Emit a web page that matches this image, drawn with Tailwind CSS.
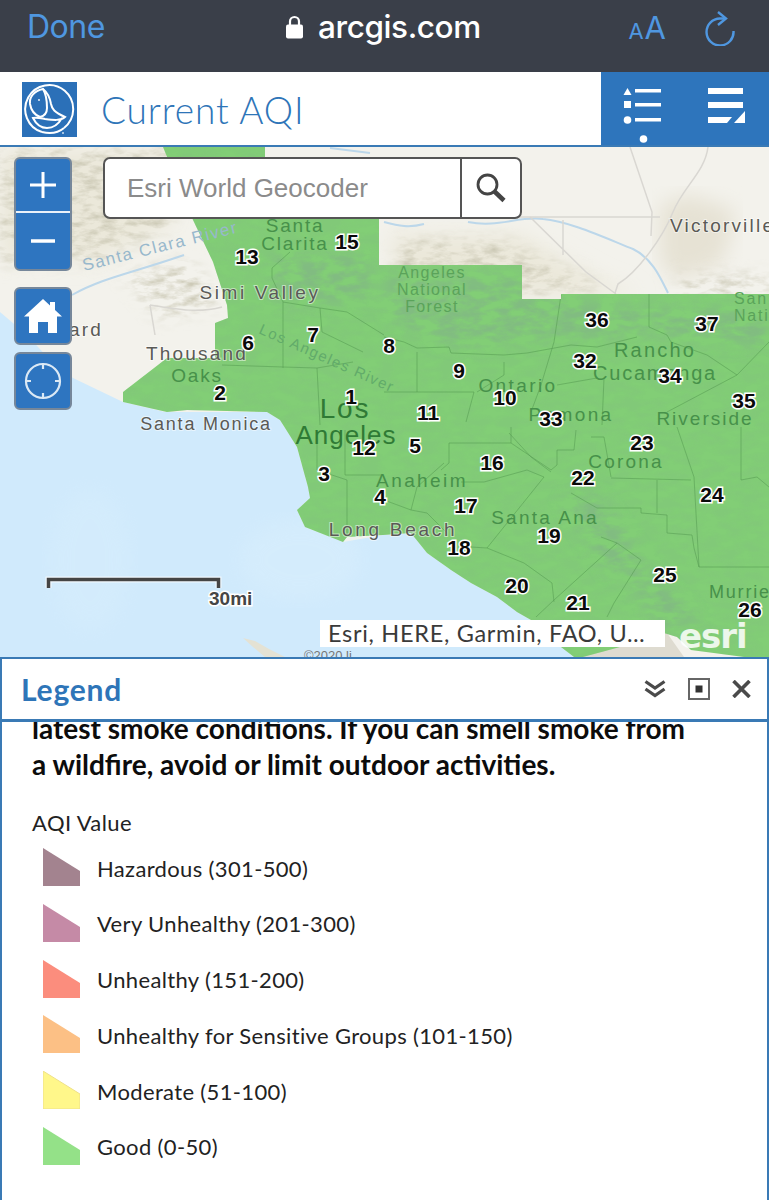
<!DOCTYPE html>
<html lang="en">
<head>
  <meta charset="UTF-8" />
  <title>Current AQI</title>
  <script src="https://cdn.jsdelivr.net/npm/@tailwindcss/browser@4"></script>
</head>
<body class="bg-white w-[769px] h-[1200px] overflow-hidden font-['Lato',sans-serif]">

  <!-- Browser bar -->
  <div class="h-[72px] bg-[#3a3f49] relative flex items-start justify-between pl-[27px] pr-[34px] pt-[6px]">
    <span class="font-['Inter',sans-serif] text-[32px] leading-[42px] text-[#4f97e0] tracking-[-0.5px]">Done</span>
    <div class="absolute left-[286px] top-[6px] flex items-center gap-[15px] h-[42px]">
      <svg width="17" height="24" viewBox="0 0 17 24"><path d="M4 10V6.500a4.500 4.500 0 0 1 9 0V10" fill="none" stroke="#fff" stroke-width="2.200"/><rect x="0" y="9.500" width="17" height="14" rx="2" fill="#fff"/></svg>
      <span class="font-['Inter',sans-serif] font-medium text-[31.500px] leading-[42px] text-white tracking-[-0.4px]">arcgis.com</span>
    </div>
    <div class="flex items-center gap-[39px] h-[42px]">
      <span class="font-['Inter',sans-serif] text-[#4f97e0] leading-none flex items-baseline"><span class="text-[22px] mr-[1px]">A</span><span class="text-[31px]">A</span></span>
      <svg width="30" height="36" viewBox="0 0 30 36" fill="none" stroke="#4f97e0" stroke-width="2.400" class="mt-[2px]"><path d="M21 8.500H15A13.500 13.500 0 1 0 28.500 21"/><path d="M13 2l8 6.500-8 6.500"/></svg>
    </div>
  </div>

  <!-- App header -->
  <div class="h-[75px] bg-white border-b-2 border-[#3a7ab5] flex">
    <div class="flex-1 flex items-start pl-[22px] pt-[10px] gap-[24px]">
      <svg width="55" height="55" viewBox="0 0 55 55" class="shrink-0">
        <rect width="55" height="55" fill="#2b70b8"/>
        <g fill="none" stroke="#fff" stroke-width="2">
          <path d="M42 46A24 24 0 1 0 20 50"/>
          <path d="M21 7C12 9 7 15 8 22c1 6 5 11 10 13 4-1 7-4 7-9 0-7-1-14-4-19z"/>
          <path d="M21 7c5 4 7 9 8 15 1 5 3 8 14 13-4 4-12 3-20 2-5-1-8-2-12-1 3 6 8 10 14 10 6 0 11-3 15-10"/>
          <path d="M20 50c8 2 16 1 22-4"/>
        </g>
        <circle cx="17" cy="18" r="0.900" fill="#fff"/>
        <circle cx="41" cy="51" r="1" fill="#cfe0f2"/>
      </svg>
      <h1 class="font-['Lato',sans-serif] font-light text-[37px] leading-[56px] text-[#2e75b8] tracking-[0.900px]">Current AQI</h1>
    </div>
    <div class="w-[168px] bg-[#2e75bc] relative">
      <svg class="absolute left-[22px] top-[14px]" width="42" height="60" viewBox="0 0 42 60" fill="#fff">
        <path d="M4.500 2l4 7h-8z"/><rect x="12" y="3" width="26" height="3.500"/>
        <rect x="1" y="15" width="7" height="7"/><rect x="12" y="17" width="26" height="3.500"/>
        <circle cx="4.500" cy="34" r="3.800"/><rect x="12" y="32" width="26" height="3.500"/>
        <circle cx="20.500" cy="53" r="3.800"/>
      </svg>
      <svg class="absolute left-[106px] top-[15px]" width="40" height="38" viewBox="0 0 40 38" fill="#fff">
        <rect x="1" y="1" width="35" height="6"/><rect x="1" y="15" width="35" height="6"/>
        <path d="M1 30h24l-5 6H1z"/><path d="M38 24v12H27z"/>
      </svg>
    </div>
  </div>

  <!-- Map -->
  <div class="relative h-[510px] overflow-hidden bg-[#f3f2ee]">
    <svg class="absolute inset-0" width="769" height="510" viewBox="0 147 769 510">
      <defs>
        <filter id="hills" x="-10%" y="-10%" width="120%" height="120%">
          <feGaussianBlur in="SourceGraphic" stdDeviation="8" result="soft"/>
          <feTurbulence type="fractalNoise" baseFrequency="0.06 0.15" numOctaves="4" seed="7" result="noise"/>
          <feColorMatrix in="noise" type="matrix" values="0 0 0 0 0.58  0 0 0 0 0.56  0 0 0 0 0.44  0 0 2 0 -0.8" result="tint"/>
          <feComposite in="tint" in2="soft" operator="in"/>
        </filter>
        <filter id="greenhills" x="-10%" y="-10%" width="120%" height="120%">
          <feGaussianBlur in="SourceGraphic" stdDeviation="7" result="soft"/>
          <feTurbulence type="fractalNoise" baseFrequency="0.05 0.11" numOctaves="4" seed="11" result="noise"/>
          <feColorMatrix in="noise" type="matrix" values="0 0 0 0 0.22  0 0 0 0 0.5  0 0 0 0 0.22  0 0 3 0 -1.050" result="tint"/>
          <feComposite in="tint" in2="soft" operator="in"/>
        </filter>
        <filter id="soft"><feGaussianBlur stdDeviation="10"/></filter>
        <clipPath id="aqi"><path d="M163 147H265V160L379 160V265H522V299H561V294H769V657H744L691 650 677 637 664 633 620 647 583 657H574L561 647 531 620 517 612 497 597 471 583 451 570 427 553 411 533 383 535 347 537 343 542 305 527 297 510 310 498 308 487 297 447 280 420 267 412 187 410 167 412 123 402V392L167 358H215V323L228 318 227 305 213 262 193 220z"/></clipPath>
      </defs>

      <!-- land and water -->
      <rect x="0" y="147" width="769" height="510" fill="#f3f2ec"/>
      <path d="M0 312L27 335 50 360 73 378 123 402 165 412 267 412 280 420 297 447 308 487 310 498 297 510 305 527 343 542 383 535 411 533 427 553 451 570 471 583 497 597 517 612 531 620 561 647 574 657H0z" fill="#d0eafc"/>
      <ellipse cx="300" cy="560" rx="60" ry="40" fill="#e0f2fd" filter="url(#soft)" opacity="0.300"/>
      <ellipse cx="90" cy="560" rx="40" ry="70" fill="#dbf0fd" filter="url(#soft)" opacity="0.300"/>
      <path d="M243 638l12 3 14 8 16 8h-20l-12-10z" fill="#e4e2d4"/>

      <!-- beige terrain -->
      <g fill="#ebe8da" filter="url(#soft)">
        <path d="M0 150H190L170 225 95 262 0 260z"/>
        <path d="M390 235H520L600 280 640 295H400z"/>
      </g>
      <path d="M660 205l30-10 45 15-5 30-10 25-45 15-15-20z" fill="#e6e2d4" filter="url(#soft)"/>
      <g fill="#000" filter="url(#hills)">
        <path d="M0 150H190L170 225 95 262 0 262z"/>
        <path d="M120 275l70-15 30 45-60 15z"/>
        <path d="M400 240H500L610 290 390 300z"/>
        <path d="M680 275h89v20h-89z"/>
      </g>
      <path d="M583 657l10-16 60-8 14 0 17 24z" fill="#dedbd0"/>

      <!-- rivers and roads -->
      <g fill="none" stroke="#bcd7ea" stroke-width="2">
        <path d="M72 295c30-17 60-22 112-40"/>
        <path d="M468 222c30 6 50-6 75-3 25 2 60 18 90 30 20 10 28 30 35 44"/>
        <path d="M384 222c15 4 25 6 40 2"/>
        <path d="M330 148l40 5"/>
      </g>
      <g fill="none" stroke="#d9d7d2" stroke-width="1.500">
        <path d="M630 147l22 65-1 24"/>
        <path d="M708 147c-3 25-25 40-35 65-10 25-35 60-55 72l-3 9"/>
        <path d="M460 217H660"/>
        <path d="M530 217l56 55 30 22M563 220v35"/>
        <path d="M150 305c30 5 50 8 72 2M150 305l5 30"/>
      </g>

      <!-- AQI area -->
      <path d="M163 147H265V160L379 160V265H522V299H561V294H769V657H744L691 650 677 637 664 633 620 647 583 657H574L561 647 531 620 517 612 497 597 471 583 451 570 427 553 411 533 383 535 347 537 343 542 305 527 297 510 310 498 308 487 297 447 280 420 267 412 187 410 167 412 123 402V392L167 358H215V323L228 318 227 305 213 262 193 220z" fill="#82ce76"/>

      <!-- hillshade on the AQI area -->
      <g clip-path="url(#aqi)">
        <rect x="120" y="147" width="649" height="510" fill="#000" filter="url(#greenhills)" opacity="0.250"/>
        <g fill="#000" filter="url(#greenhills)">
          <path d="M385 275h135l5 20 35 5 90 10 80 0 40 10v25l-130-10-100 5-90 5-60-25z"/>
          <path d="M560 500l40-5 40 60-30 20z"/>
          <path d="M270 255h100v45l-90 5z"/>
          <path d="M600 520l60 60 40 40-40 10-30-50z"/>
        </g>

        <!-- county lines -->
        <g fill="none" stroke="#569a52" stroke-width="1" stroke-opacity="0.550">
          <path d="M384 337l20 5 13 6 32-1 2 6 53 2 23-2 44-8 26 2 40-10"/>
          <path d="M561 295l-7 47-13 43-10 27"/>
          <path d="M649 293v34l18 8 4 7 36 13 30 20 32-33M737 375l-70 37"/>
          <path d="M417 352v40M384 392h90l-8 30M504 362v13l-27 17M597 378l-40 7M604 378l-2 47"/>
          <path d="M449 443v20l-8 7M449 443h62l40 27M511 427v16"/>
          <path d="M571 493l26 15h44v5l26 2v18l25 2 2 13 5 19h70"/>
          <path d="M601 537l16 6 24 17-27 43-7 14M617 543l-63 57-18 17"/>
          <path d="M487 548l37 15 28 20 2 19M487 548l57-71-17-7-43 12h-23M487 548l-16-1"/>
          <path d="M657 480v33M611 478l80 2M677 427l17 50 5 90M741 480v-53M741 480l16-3 12 10"/>
          <path d="M591 437h13l7 40M576 430l-2 20h-17v15l-6 5M509 433l22 24 20 15"/>
          <path d="M384 500l27 10 16 3 20 20M444 463l-27 24-6 23"/>
          <path d="M283 302v66M222 365l61 2 34 1 36-6M272 268v10l11 24M283 302l37 6 27 4 37 23M320 308l2 24 41 20M317 368l3 57M290 252l-18 16"/>
          <path d="M317 440v30l30 10v57M345 430v45h38"/>
        </g>
      </g>

      <!-- place names -->
      <g class="font-['Liberation_Sans',sans-serif] text-[19px] fill-[#5a5a56] stroke-white/50 stroke-[2px] [paint-order:stroke] tracking-[2.200px]" text-anchor="middle">
        <text x="206" y="430" class="text-[18px] tracking-[1.800px]">Santa Monica</text>
        <text x="197" y="360">Thousand</text>
        <text x="86" y="336">ard</text>
        <text x="260" y="299" class="tracking-[2.600px]">Simi Valley</text>
        <text x="670" y="232" text-anchor="start">Victorville</text>
        <text x="393" y="536" class="tracking-[2.700px]">Long Beach</text>
      </g>
      <g class="font-['Liberation_Sans',sans-serif] text-[19px] fill-[#47914a] tracking-[1.800px]" text-anchor="middle">
        <text x="295" y="232">Santa</text>
        <text x="295" y="250">Clarita</text>
        <text x="197" y="382">Oaks</text>
        <text x="432" y="278" class="text-[16px] fill-[#5aa35a] tracking-[1.400px]">Angeles</text>
        <text x="432" y="295" class="text-[16px] fill-[#5aa35a] tracking-[1.400px]">National</text>
        <text x="432" y="312" class="text-[16px] fill-[#5aa35a] tracking-[1.400px]">Forest</text>
        <text x="345" y="418" class="text-[28px] fill-[#2f7a35]">Los</text>
        <text x="346" y="444" class="text-[26px] fill-[#2f7a35] tracking-[1px]">Angeles</text>
        <text x="422" y="487" class="tracking-[2.400px]">Anaheim</text>
        <text x="518" y="392" class="tracking-[2.400px]">Ontario</text>
        <text x="571" y="421" class="tracking-[2.400px]">Pomona</text>
        <text x="655" y="357" class="text-[20px] tracking-[2.200px]">Rancho</text>
        <text x="655" y="380" class="text-[20px]">Cucamonga</text>
        <text x="705" y="425" class="tracking-[2px]">Riverside</text>
        <text x="626" y="468" class="tracking-[2.200px]">Corona</text>
        <text x="545" y="524" class="tracking-[2.200px]">Santa Ana</text>
        <text x="709" y="598" class="text-[18px]" text-anchor="start">Murrieta</text>
        <text x="734" y="304" class="text-[16px] fill-[#5aa35a]" text-anchor="start">San</text>
        <text x="734" y="321" class="text-[16px] fill-[#5aa35a]" text-anchor="start">Nati</text>
      </g>
      <text x="84" y="271" transform="rotate(-14 84 271)" class="font-['Liberation_Sans',sans-serif] text-[17px] fill-[#98b8cc] tracking-[1.500px]">Santa Clara River</text>
      <text x="258" y="333" transform="rotate(24 258 333)" class="font-['Liberation_Sans',sans-serif] text-[15px] fill-[#62ab6a] tracking-[1.500px]">Los Angeles River</text>

      <!-- monitor numbers -->
      <g class="font-['Liberation_Sans',sans-serif] font-bold text-[21px] fill-[#0a0a0a] stroke-white stroke-[3px] [paint-order:stroke]" text-anchor="middle">
        <text x="247" y="264">13</text><text x="347" y="249">15</text>
        <text x="248" y="350">6</text><text x="313" y="342">7</text>
        <text x="389" y="353">8</text><text x="220" y="400">2</text>
        <text x="351" y="404">1</text><text x="459" y="378">9</text>
        <text x="505" y="405">10</text><text x="428" y="420">11</text>
        <text x="364" y="455">12</text><text x="415" y="453">5</text>
        <text x="324" y="481">3</text><text x="380" y="504">4</text>
        <text x="492" y="470">16</text><text x="466" y="513">17</text>
        <text x="459" y="555">18</text><text x="549" y="543">19</text>
        <text x="517" y="593">20</text><text x="578" y="610">21</text>
        <text x="583" y="485">22</text><text x="642" y="450">23</text>
        <text x="712" y="502">24</text><text x="665" y="582">25</text>
        <text x="750" y="617">26</text><text x="551" y="426">33</text>
        <text x="585" y="368">32</text><text x="670" y="383">34</text>
        <text x="744" y="408">35</text><text x="597" y="327">36</text>
        <text x="707" y="331">37</text>
      </g>

      <!-- scale bar -->
      <path d="M48.500 588v-8.500h170v8.500" fill="none" stroke="#fff" stroke-width="6" stroke-opacity="0.700"/>
      <path d="M48.500 588v-8.500h170v8.500" fill="none" stroke="#454545" stroke-width="3.500"/>
      <text x="209" y="605" class="font-['Liberation_Sans',sans-serif] font-bold text-[19px] fill-[#454545] stroke-white stroke-[3px] [paint-order:stroke]">30mi</text>

      <text x="304" y="660" class="font-['Liberation_Sans',sans-serif] text-[13px] fill-[#777]">©2020 li</text>
      <text x="679" y="648" class="font-['DejaVu_Sans',sans-serif] font-bold text-[34px] fill-white/85 tracking-[-1px]">esri</text>
    </svg>

    <!-- Zoom buttons -->
    <div class="absolute left-[14px] top-[10px] w-[58px] h-[114px] bg-[#2e75c0] border-2 border-[#76879a] rounded-[6px] flex flex-col">
      <div class="h-[54px] border-b-2 border-white/90 flex items-center justify-center">
        <svg width="28" height="28" viewBox="0 0 28 28" stroke="#fff" stroke-width="3"><path d="M14 1v26M1 14h26"/></svg>
      </div>
      <div class="flex-1 flex items-center justify-center">
        <svg width="24" height="4" viewBox="0 0 24 4" stroke="#fff" stroke-width="3.500"><path d="M0 2h24"/></svg>
      </div>
    </div>
    <!-- Home -->
    <div class="absolute left-[14px] top-[140px] w-[58px] h-[58px] bg-[#2e75c0] border-2 border-[#76879a] rounded-[6px] flex items-center justify-center">
      <svg width="38" height="36" viewBox="0 0 38 36" fill="#fff"><path d="M19 1L0 18.500h5V35h9V24h10v11h9V18.500h5l-7-6.500V4h-5v3.500z"/></svg>
    </div>
    <!-- Locate -->
    <div class="absolute left-[14px] top-[205px] w-[58px] h-[58px] bg-[#2e75c0] border-2 border-[#76879a] rounded-[6px] flex items-center justify-center">
      <svg width="38" height="38" viewBox="0 0 38 38" fill="none" stroke="#dbe9f5" stroke-width="2.200"><circle cx="19" cy="19" r="17"/><path d="M19 2v5M19 31v5M2 19h5M31 19h5"/></svg>
    </div>

    <!-- Search -->
    <div class="absolute left-[103px] top-[10px] w-[419px] h-[62px] bg-white border-2 border-[#555] rounded-[7px] flex">
      <div class="w-[355px] pl-[22px] font-['Liberation_Sans',sans-serif] text-[26px] leading-[58px] text-[#8b8b8b]">Esri World Geocoder</div>
      <div class="flex-1 border-l-2 border-[#555] flex items-center justify-center">
        <svg width="30" height="30" viewBox="0 0 30 30" fill="none" stroke="#444"><circle cx="11.500" cy="11.500" r="9.500" stroke-width="2.800"/><path d="M18.500 18.500l9.500 9" stroke-width="4.500"/></svg>
      </div>
    </div>

    <!-- Attribution -->
    <div class="absolute left-[320px] top-[473px] w-[345px] h-[27px] bg-white pl-[8px] font-['Lato',sans-serif] text-[23.500px] leading-[27px] text-[#3a3a3a] whitespace-nowrap tracking-[0.700px]">Esri, HERE, Garmin, FAO, U…</div>
  </div>

  <!-- Legend panel -->
  <div class="h-[543px] bg-white border-x-2 border-t-2 border-[#3a7ab5] flex flex-col">
    <div class="h-[63px] shrink-0 border-b-[3px] border-[#3a7ab5] flex items-center justify-between pl-[19px] pr-[16px]">
      <h2 class="font-['Lato',sans-serif] font-bold text-[30px] tracking-[0.800px] text-[#2e75b8]">Legend</h2>
      <div class="flex items-center gap-[22px]">
        <svg width="22" height="18" viewBox="0 0 22 18" fill="none" stroke="#4a4a4a" stroke-width="3.200"><path d="M1.500 1.500L11 8l9.500-6.500M1.500 9L11 15.500 20.500 9"/></svg>
        <svg width="22" height="22" viewBox="0 0 22 22"><rect x="1" y="1" width="20" height="20" fill="none" stroke="#666" stroke-width="2"/><rect x="7.500" y="7.500" width="7" height="7" fill="#333"/></svg>
        <svg width="19" height="18" viewBox="0 0 19 18" stroke="#4a4a4a" stroke-width="3.600"><path d="M1.500 1l16 16M17.500 1l-16 16"/></svg>
      </div>
    </div>
    <div class="flex-1 overflow-hidden pl-[30px]">
      <p class="mt-[-12px] font-['Lato',sans-serif] font-bold text-[28px] leading-[36px] text-[#0c0c0c] whitespace-nowrap">latest smoke conditions. If you can smell smoke from<br>a wildfire, avoid or limit outdoor activities.</p>
      <div class="mt-[27px] text-[22px] leading-[28px] text-[#222] tracking-[0.400px]">AQI Value</div>
      <div class="mt-[11px] pl-[11px] flex flex-col gap-[17.800px] text-[22px] leading-[38px] text-[#222] tracking-[0.350px]">
        <div class="flex items-center gap-[17px] h-[38px]">
          <svg width="37" height="38" viewBox="0 0 37 38"><path d="M0 0L37 23V38H0z" fill="#a3838f"/></svg><span class="pt-[3px]">Hazardous (301-500)</span>
        </div>
        <div class="flex items-center gap-[17px] h-[38px]">
          <svg width="37" height="38" viewBox="0 0 37 38"><path d="M0 0L37 23V38H0z" fill="#c58aa6"/></svg><span class="pt-[3px]">Very Unhealthy (201-300)</span>
        </div>
        <div class="flex items-center gap-[17px] h-[38px]">
          <svg width="37" height="38" viewBox="0 0 37 38"><path d="M0 0L37 23V38H0z" fill="#fb8d7d"/></svg><span class="pt-[3px]">Unhealthy (151-200)</span>
        </div>
        <div class="flex items-center gap-[17px] h-[38px]">
          <svg width="37" height="38" viewBox="0 0 37 38"><path d="M0 0L37 23V38H0z" fill="#fcc085"/></svg><span class="pt-[3px]">Unhealthy for Sensitive Groups (101-150)</span>
        </div>
        <div class="flex items-center gap-[17px] h-[38px]">
          <svg width="37" height="38" viewBox="0 0 37 38"><path d="M0 0L37 23V38H0z" fill="#fff78a" stroke="#eee08a"/></svg><span class="pt-[3px]">Moderate (51-100)</span>
        </div>
        <div class="flex items-center gap-[17px] h-[38px]">
          <svg width="37" height="38" viewBox="0 0 37 38"><path d="M0 0L37 23V38H0z" fill="#94e188"/></svg><span class="pt-[3px]">Good (0-50)</span>
        </div>
      </div>
    </div>
  </div>
</body>
</html>
